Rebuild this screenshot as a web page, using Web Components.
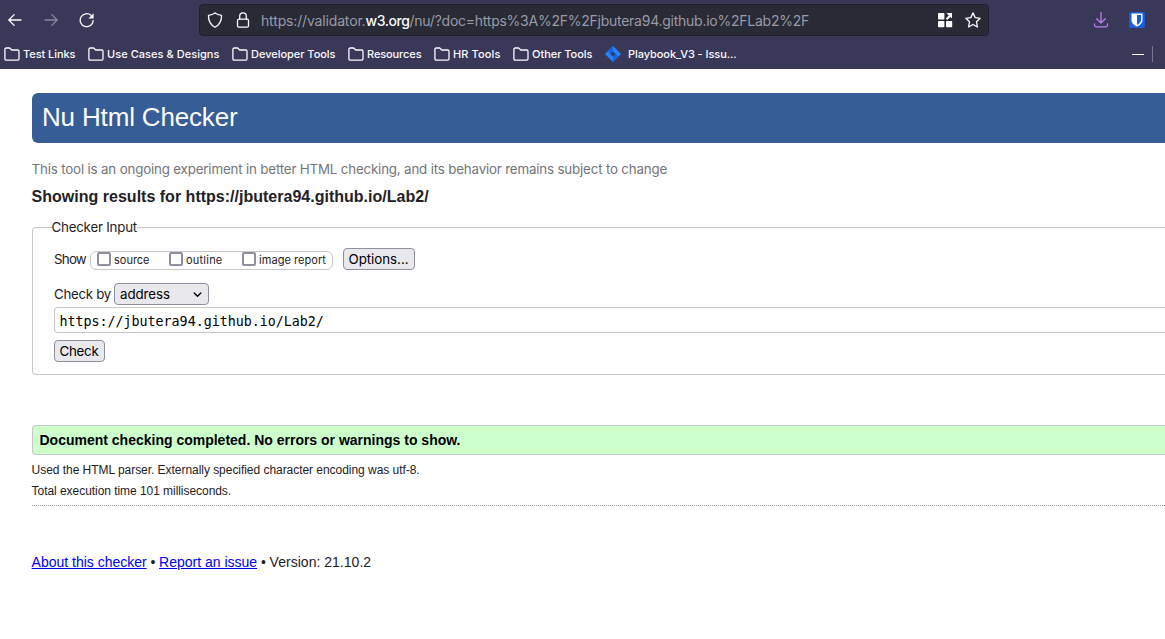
<!DOCTYPE html>
<html lang="en"><head><meta charset="utf-8"><title>Nu Html Checker</title>
<style>
html,body{margin:0;height:100%;overflow:hidden;background:#fff}
body{font-family:Inter,sans-serif;color:#1f2126}
</style></head><body>
<browser-toolbar></browser-toolbar>
<checker-page></checker-page>
<script>
const make=(name,html,setup)=>customElements.define(name,class extends HTMLElement{
  connectedCallback(){
    if(this.shadowRoot)return;
    const t=document.createElement('template');t.innerHTML=html;
    this.attachShadow({mode:'open'}).append(t.content.cloneNode(true));
    if(setup)setup.call(this,this.shadowRoot);
  }
});

// A run of text tracked to an exact advance width (attribute w, in px).
make('fit-text','<style>:host{display:inline-block;white-space:pre;text-decoration:inherit}span{display:inline-block;text-decoration:inherit}</style><span><slot></slot></span>',function(r){
  const s=r.querySelector('span'),w=+this.getAttribute('w'),n=this.textContent.length;
  const natural=s.getBoundingClientRect().width;
  s.style.letterSpacing=((w-natural)/n).toFixed(4)+'px';
  this.style.width=w+'px';
});

const icons={
 back:'<path d="M14 8H2M7.2 2.6 1.8 8l5.4 5.4"/>',
 forward:'<path d="M2 8h12M8.8 2.6 14.2 8l-5.4 5.4"/>',
 reload:'<path d="M14.2 8.6A6.5 6.5 0 1 1 12 3.3"/><path d="M14.6 1.2v5.2H9.4z" fill="currentColor" stroke="none"/>',
 shield:'<path d="M8 .9c1.7 1.6 3.9 2.3 6.5 2.4.2 5.4-1.4 9.3-6.5 12-5.1-2.7-6.7-6.6-6.5-12C4.100 3.200 6.300 2.500 8 .9z"/>',
 lock:'<rect x="2.500" y="7.200" width="11" height="8" rx="1.500"/><path d="M4.700 7V4.200a3.300 3.300 0 0 1 6.600 0V7"/>',
 folder:'<path d="M.9 12.800V3.300c0-.8.5-1.300 1.300-1.300h3.500l2 2h6c.8 0 1.300.5 1.300 1.300v7.500c0 .8-.5 1.300-1.300 1.300H2.200c-.8 0-1.300-.5-1.300-1.300z"/>',
 grid:'<g fill="currentColor" stroke="none"><rect x="1" y="1" width="6.400" height="6.400" rx=".7"/><rect x="1" y="9" width="6.400" height="6.200" rx=".7"/><rect x="9" y="9" width="6.200" height="6.200" rx=".7"/><path d="M9.500 1H15v5.600l-1.700-1.700-3 3-1.500-1.500 3-3z"/></g>',
 star:'<path d="m8 .9 2.200 4.700 5 .7-3.700 3.500.9 5.200L8 12.500 3.600 15l.9-5.200L.8 6.300l5-.7z"/>',
 download:'<path d="M8 .7v10M3.700 6.700 8 11l4.300-4.300M1.500 11.800v1.500c0 1 .5 1.500 1.500 1.500h10c1 0 1.500-.5 1.500-1.500v-1.500"/>',
 vault:'<rect width="16" height="16" rx="2" fill="#175ddc" stroke="none"/><path d="M2.500 1.600h11v6.700c0 3-2.700 5-5.500 6.200-2.800-1.200-5.500-3.200-5.500-6.200z" fill="#fff" stroke="none"/><path d="M8 3.100h4v5.200c0 1.900-1.800 3.500-4 4.600z" fill="#175ddc" stroke="none"/>',
 jira:'<path d="m8 0 8 8-8 8-8-8z" fill="#2684ff" stroke="none"/><path d="M8 0v5.200L5.200 8 2.600 5.400zM8 16v-5.200L10.800 8l2.600 2.600z" fill="#1264e0" stroke="none"/><path d="m8 5.200 2.800 2.800L8 10.800 5.200 8z" fill="#243f72" stroke="none"/>',
 chevron:'<path d="m3.200 5.700 4.800 4.700 4.800-4.700" stroke-width="2"/>'
};
make('ui-icon','<style>:host{display:block;flex:none;width:16px;height:16px}svg{display:block;width:100%;height:100%;fill:none;stroke:currentColor;stroke-width:1.3;stroke-linecap:round;stroke-linejoin:round}</style><svg viewBox="0 0 16 16"></svg>',function(r){
  r.querySelector('svg').innerHTML=icons[this.getAttribute('name')]||'';
});

make('book-mark',`<style>
:host{display:flex;align-items:center;height:16px;gap:3px;font:500 11px/16px Inter,sans-serif;color:#fbfbfe}
:host([icon]){gap:7px}
</style><ui-icon></ui-icon><slot></slot>`,function(r){
  r.querySelector('ui-icon').shadowRoot.querySelector('svg').innerHTML=icons[this.getAttribute('icon')||'folder'];
});

make('browser-toolbar',`<style>
:host{display:block;height:69px;background:#3a3858;color:#fbfbfe;overflow:hidden}
.nav{display:flex;align-items:center;height:40px;padding-left:7px;box-sizing:border-box}
.nav>.f{margin-left:20px;opacity:.4}
.nav>.r{margin-left:20px}
.url{box-sizing:border-box;margin-left:104px;width:790px;height:32px;border:1px solid #20202c;border-radius:4px;background:#282a36;display:flex;align-items:center;padding:0 7px;font:14px/20px Inter,sans-serif;color:#9a9aa6}
.url ui-icon{color:#fbfbfe}
.url ui-icon+ui-icon{margin-left:12px}
.url .t{display:flex;margin:1px auto 0 10px}
.url b{font-weight:500;color:#fbfbfe}
.dl{color:#b97ff0;margin-left:103.500px}
.v{margin-left:20.500px}
.marks{display:flex;align-items:center;height:28px;padding-left:4px}
.marks book-mark{margin-right:12.500px}
.min{width:12px;height:1px;background:#fbfbfe;margin-left:auto}
.bar{width:1px;height:16px;background:#777590;margin:0 12px 0 8px}
</style>
<div class="nav"><ui-icon name="back"></ui-icon><ui-icon class="f" name="forward"></ui-icon><ui-icon class="r" name="reload"></ui-icon>
<div class="url"><ui-icon name="shield"></ui-icon><ui-icon name="lock"></ui-icon><div class="t"><fit-text w="104.500">https://validator.</fit-text><b><fit-text w="44">w3.org</fit-text></b><fit-text w="399.500">/nu/?doc=https%3A%2F%2Fjbutera94.github.io%2FLab2%2F</fit-text></div><ui-icon name="grid"></ui-icon><ui-icon name="star"></ui-icon></div>
<ui-icon class="dl" name="download"></ui-icon><ui-icon class="v" name="vault"></ui-icon></div>
<div class="marks">
<book-mark><fit-text w="52.500">Test Links</fit-text></book-mark>
<book-mark><fit-text w="112.500">Use Cases &amp; Designs</fit-text></book-mark>
<book-mark><fit-text w="84.500">Developer Tools</fit-text></book-mark>
<book-mark><fit-text w="54.500">Resources</fit-text></book-mark>
<book-mark><fit-text w="47.500">HR Tools</fit-text></book-mark>
<book-mark><fit-text w="60.500">Other Tools</fit-text></book-mark>
<book-mark icon="jira"><fit-text w="108.500">Playbook_V3 - Issu...</fit-text></book-mark>
<span class="min"></span><span class="bar"></span></div>`);

make('push-button',`<style>:host{box-sizing:border-box;display:flex;align-items:center;height:22px;padding:0 5.500px 0 4.500px;border:1px solid #8f8f9d;border-radius:4px;background:#e9e9ed;color:#000;font:13.333px/20px Inter,sans-serif}</style><slot></slot>`);

make('check-option',`<style>:host{display:flex;font:11px/17px Inter,sans-serif}i{box-sizing:border-box;width:14px;height:14px;border:2px solid #8f8f9d;border-radius:2px;background:#fff;margin-right:3px}</style><i></i><slot></slot>`);

make('checker-page',`<style>
:host{display:block;padding:24px 0 0 32px;overflow:hidden;font:13.333px/20px Inter,sans-serif;color:#1f2126}
.a{font-family:"Liberation Sans",Arial,sans-serif}
h1{margin:0;height:50px;box-sizing:border-box;padding:9px 0 0 10px;border-radius:6px 0 0 6px;background:#365d95;color:#fff;font-weight:400;font-size:26px;line-height:30px}
.note{margin-top:16px;height:20px;color:#75757a}
h2{margin:8px 0 0;height:20px;font-size:16px;line-height:20px;color:#1f2126}
.note,h2,.s,footer{margin-left:-.4px}
fieldset{margin:11px 0 0;padding:0 0 0 21px;border:1px solid #c8c8c8;border-right:0;border-radius:4px 0 0 4px;min-width:0;height:157px;box-sizing:border-box}
legend{margin-left:-2.500px;padding:0;height:18px;line-height:18px}
.show{display:flex;align-items:center;height:22px;margin-top:12px}
.opts{box-sizing:border-box;width:243px;height:19px;border:1px solid #c8c8c8;border-radius:6px;margin:2px 10px 0 4px;padding-left:6px;display:grid;grid-template-columns:72px 73px auto}
.by{display:flex;align-items:center;height:22px;margin-top:13px;gap:3px}
.sel{box-sizing:border-box;width:95px;height:22px;border:1px solid #8f8f9d;border-radius:4px;background:#e9e9ed;color:#000;display:flex;align-items:center;justify-content:space-between;padding:0 5px}
.sel ui-icon{width:11px;height:11px}
.input{box-sizing:border-box;height:26px;margin-top:2px;border:1px solid #c8c8c8;border-right:0;border-radius:4px 0 0 4px;padding:2px 0 0 4.400px;line-height:24px;font-family:"DejaVu Sans Mono",monospace;color:#000}
.go{display:flex;margin-top:7px}
.ok{margin-top:50px;height:30px;box-sizing:border-box;border:1px solid #c8c8c8;border-right:0;border-radius:4px 0 0 4px;background:#cfc;color:#000;padding-left:6.500px;font-weight:700;font-size:14px;line-height:29px}
.s{font-size:12px;line-height:20px;height:20px}
.s.p{margin-top:5px}.s.q{margin-top:1px}
.line{border-top:1px dotted #999;margin-top:4px;height:0}
footer{margin-top:46px;display:flex;font-size:14px;line-height:20px}
a{color:#00e;text-decoration:underline}
</style>
<h1 class="a"><fit-text w="195.500">Nu Html Checker</fit-text></h1>
<div class="note"><fit-text w="635.500">This tool is an ongoing experiment in better HTML checking, and its behavior remains subject to change</fit-text></div>
<h2 class="a"><fit-text w="397">Showing results for https://jbutera94.github.io/Lab2/</fit-text></h2>
<fieldset><legend><fit-text w="85.500">Checker Input</fit-text></legend>
<div class="show"><fit-text w="32">Show</fit-text><div class="opts"><check-option><fit-text w="35.500">source</fit-text></check-option><check-option><fit-text w="36.500">outline</fit-text></check-option><check-option><fit-text w="67">image report</fit-text></check-option></div><push-button><fit-text w="60">Options...</fit-text></push-button></div>
<div class="by"><fit-text w="57">Check by</fit-text><div class="sel"><fit-text w="50">address</fit-text><ui-icon name="chevron"></ui-icon></div></div>
<div class="input"><fit-text w="264.500">https://jbutera94.github.io/Lab2/</fit-text></div>
<div class="go"><push-button><fit-text w="39">Check</fit-text></push-button></div>
</fieldset>
<div class="ok a"><fit-text w="421">Document checking completed. No errors or warnings to show.</fit-text></div>
<div class="s p a"><fit-text w="388">Used the HTML parser. Externally specified character encoding was utf-8.</fit-text></div>
<div class="s q a"><fit-text w="199.500">Total execution time 101 milliseconds.</fit-text></div>
<div class="line"></div>
<footer class="a"><a><fit-text w="115">About this checker</fit-text></a><fit-text w="12.500"> • </fit-text><a><fit-text w="98">Report an issue</fit-text></a><fit-text w="12.500"> • </fit-text><fit-text w="101.500">Version: 21.10.2</fit-text></footer>`);
</script></body></html>
